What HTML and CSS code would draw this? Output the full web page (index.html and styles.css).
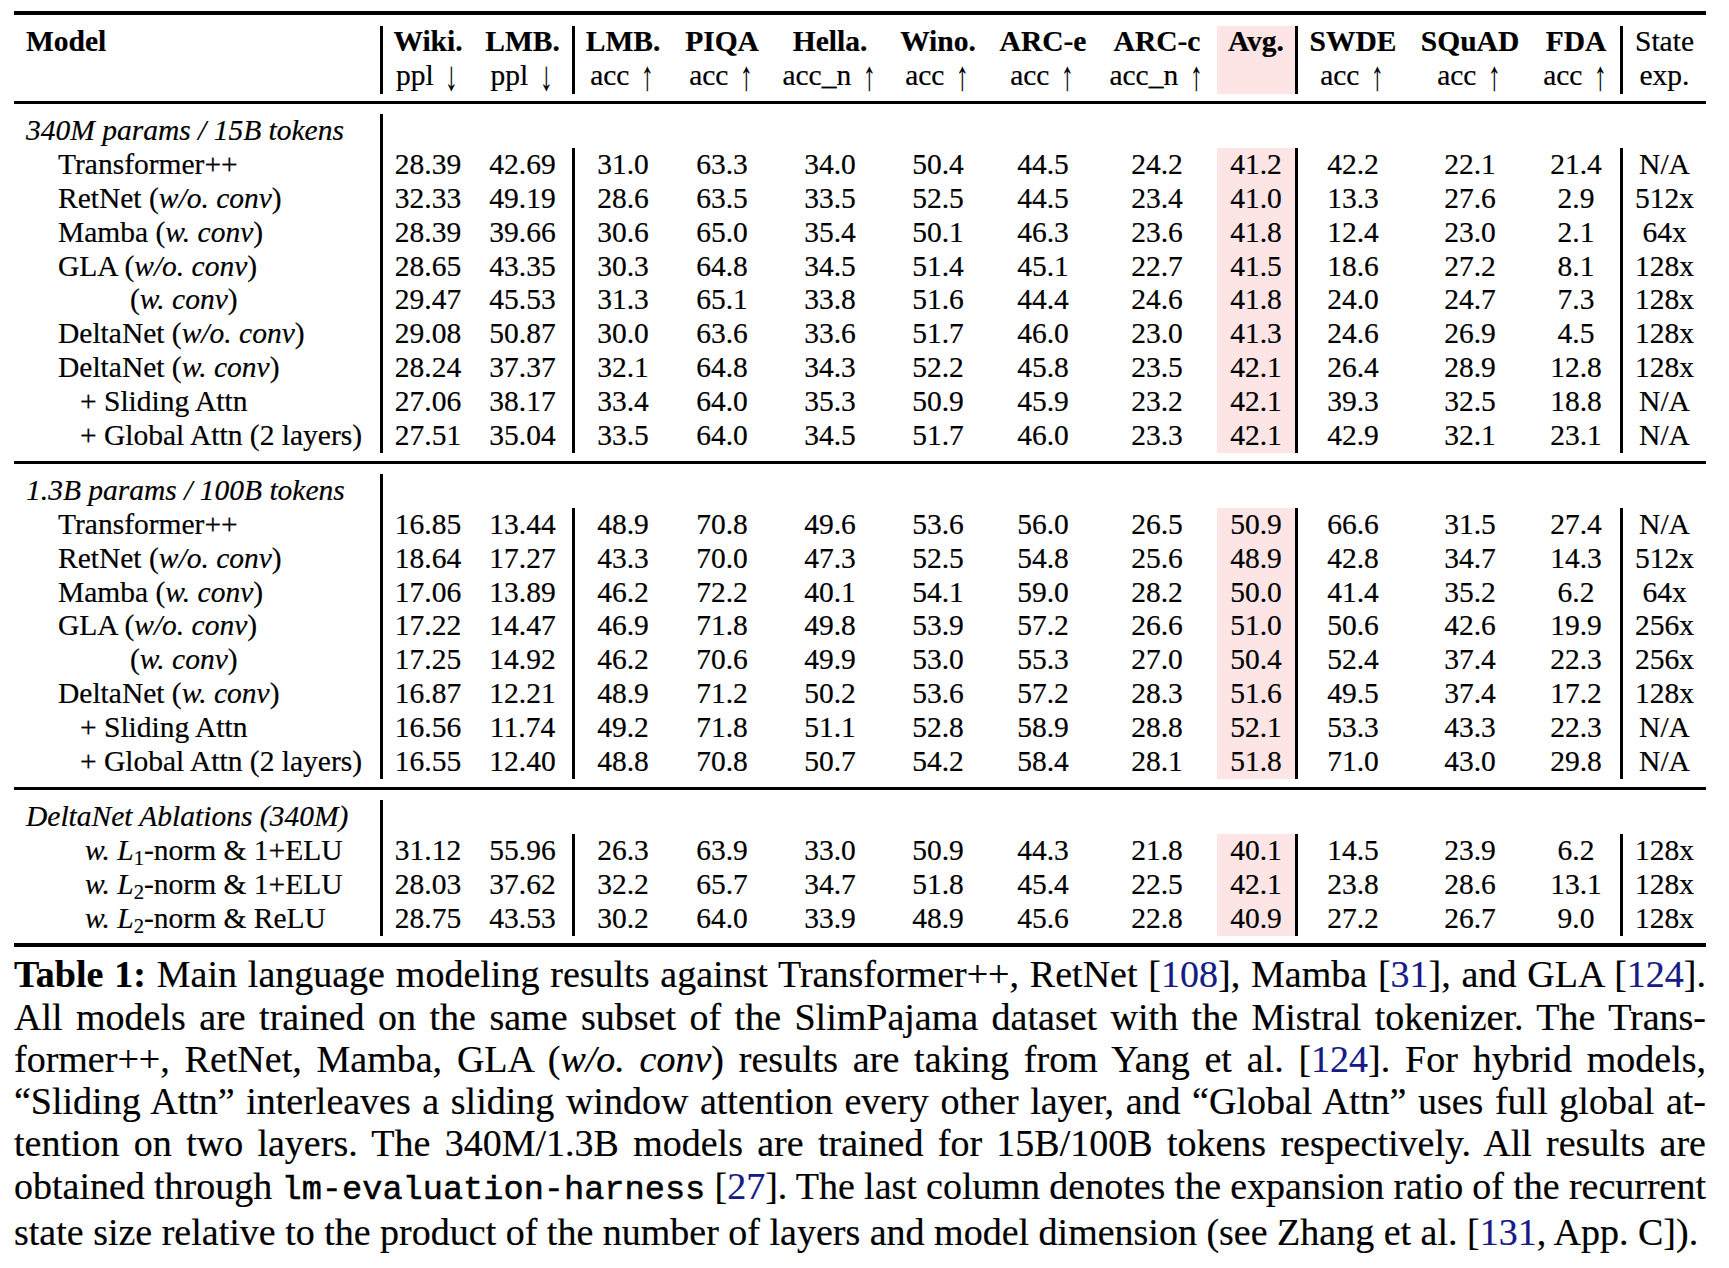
FILE: index.html
```html
<!DOCTYPE html>
<html lang="en">
<head>
<meta charset="utf-8">
<title>Table 1</title>
<link rel="stylesheet" href="styles.css">
</head>
<body>
<div class="page">
  <div class="rule heavy"></div>

  <div class="head">
    <div class="hc"><b>Model</b></div>
    <div class="hc"><b>Wiki.</b><span>ppl <span class="arr">↓</span></span></div>
    <div class="hc"><b>LMB.</b><span>ppl <span class="arr">↓</span></span></div>
    <div class="hc"><b>LMB.</b><span>acc <span class="arr">↑</span></span></div>
    <div class="hc"><b>PIQA</b><span>acc <span class="arr">↑</span></span></div>
    <div class="hc"><b>Hella.</b><span>acc_n <span class="arr">↑</span></span></div>
    <div class="hc"><b>Wino.</b><span>acc <span class="arr">↑</span></span></div>
    <div class="hc"><b>ARC-e</b><span>acc <span class="arr">↑</span></span></div>
    <div class="hc"><b>ARC-c</b><span>acc_n <span class="arr">↑</span></span></div>
    <div class="hc"><b>Avg.</b></div>
    <div class="hc"><b>SWDE</b><span>acc <span class="arr">↑</span></span></div>
    <div class="hc"><b>SQuAD</b><span>acc <span class="arr">↑</span></span></div>
    <div class="hc"><b>FDA</b><span>acc <span class="arr">↑</span></span></div>
    <div class="hc"><span>State</span><span>exp.</span></div>
  </div>

  <div class="rule"></div>

  <div class="section">
    <div class="row title"><span class="label"><i>340M params / 15B tokens</i></span><span class="rest"></span></div>
    <div class="row data"><span class="m1">Transformer++</span><span>28.39</span><span>42.69</span><span>31.0</span><span>63.3</span><span>34.0</span><span>50.4</span><span>44.5</span><span>24.2</span><span>41.2</span><span>42.2</span><span>22.1</span><span>21.4</span><span>N/A</span></div>
    <div class="row data"><span class="m1">RetNet (<i>w/o. conv</i>)</span><span>32.33</span><span>49.19</span><span>28.6</span><span>63.5</span><span>33.5</span><span>52.5</span><span>44.5</span><span>23.4</span><span>41.0</span><span>13.3</span><span>27.6</span><span>2.9</span><span>512x</span></div>
    <div class="row data"><span class="m1">Mamba (<i>w. conv</i>)</span><span>28.39</span><span>39.66</span><span>30.6</span><span>65.0</span><span>35.4</span><span>50.1</span><span>46.3</span><span>23.6</span><span>41.8</span><span>12.4</span><span>23.0</span><span>2.1</span><span>64x</span></div>
    <div class="row data"><span class="m1">GLA (<i>w/o. conv</i>)</span><span>28.65</span><span>43.35</span><span>30.3</span><span>64.8</span><span>34.5</span><span>51.4</span><span>45.1</span><span>22.7</span><span>41.5</span><span>18.6</span><span>27.2</span><span>8.1</span><span>128x</span></div>
    <div class="row data"><span class="m3">(<i>w. conv</i>)</span><span>29.47</span><span>45.53</span><span>31.3</span><span>65.1</span><span>33.8</span><span>51.6</span><span>44.4</span><span>24.6</span><span>41.8</span><span>24.0</span><span>24.7</span><span>7.3</span><span>128x</span></div>
    <div class="row data"><span class="m1">DeltaNet (<i>w/o. conv</i>)</span><span>29.08</span><span>50.87</span><span>30.0</span><span>63.6</span><span>33.6</span><span>51.7</span><span>46.0</span><span>23.0</span><span>41.3</span><span>24.6</span><span>26.9</span><span>4.5</span><span>128x</span></div>
    <div class="row data"><span class="m1">DeltaNet (<i>w. conv</i>)</span><span>28.24</span><span>37.37</span><span>32.1</span><span>64.8</span><span>34.3</span><span>52.2</span><span>45.8</span><span>23.5</span><span>42.1</span><span>26.4</span><span>28.9</span><span>12.8</span><span>128x</span></div>
    <div class="row data"><span class="m2">+ Sliding Attn</span><span>27.06</span><span>38.17</span><span>33.4</span><span>64.0</span><span>35.3</span><span>50.9</span><span>45.9</span><span>23.2</span><span>42.1</span><span>39.3</span><span>32.5</span><span>18.8</span><span>N/A</span></div>
    <div class="row data"><span class="m2">+ Global Attn (2 layers)</span><span>27.51</span><span>35.04</span><span>33.5</span><span>64.0</span><span>34.5</span><span>51.7</span><span>46.0</span><span>23.3</span><span>42.1</span><span>42.9</span><span>32.1</span><span>23.1</span><span>N/A</span></div>
  </div>

  <div class="rule"></div>

  <div class="section">
    <div class="row title"><span class="label"><i>1.3B params / 100B tokens</i></span><span class="rest"></span></div>
    <div class="row data"><span class="m1">Transformer++</span><span>16.85</span><span>13.44</span><span>48.9</span><span>70.8</span><span>49.6</span><span>53.6</span><span>56.0</span><span>26.5</span><span>50.9</span><span>66.6</span><span>31.5</span><span>27.4</span><span>N/A</span></div>
    <div class="row data"><span class="m1">RetNet (<i>w/o. conv</i>)</span><span>18.64</span><span>17.27</span><span>43.3</span><span>70.0</span><span>47.3</span><span>52.5</span><span>54.8</span><span>25.6</span><span>48.9</span><span>42.8</span><span>34.7</span><span>14.3</span><span>512x</span></div>
    <div class="row data"><span class="m1">Mamba (<i>w. conv</i>)</span><span>17.06</span><span>13.89</span><span>46.2</span><span>72.2</span><span>40.1</span><span>54.1</span><span>59.0</span><span>28.2</span><span>50.0</span><span>41.4</span><span>35.2</span><span>6.2</span><span>64x</span></div>
    <div class="row data"><span class="m1">GLA (<i>w/o. conv</i>)</span><span>17.22</span><span>14.47</span><span>46.9</span><span>71.8</span><span>49.8</span><span>53.9</span><span>57.2</span><span>26.6</span><span>51.0</span><span>50.6</span><span>42.6</span><span>19.9</span><span>256x</span></div>
    <div class="row data"><span class="m3">(<i>w. conv</i>)</span><span>17.25</span><span>14.92</span><span>46.2</span><span>70.6</span><span>49.9</span><span>53.0</span><span>55.3</span><span>27.0</span><span>50.4</span><span>52.4</span><span>37.4</span><span>22.3</span><span>256x</span></div>
    <div class="row data"><span class="m1">DeltaNet (<i>w. conv</i>)</span><span>16.87</span><span>12.21</span><span>48.9</span><span>71.2</span><span>50.2</span><span>53.6</span><span>57.2</span><span>28.3</span><span>51.6</span><span>49.5</span><span>37.4</span><span>17.2</span><span>128x</span></div>
    <div class="row data"><span class="m2">+ Sliding Attn</span><span>16.56</span><span>11.74</span><span>49.2</span><span>71.8</span><span>51.1</span><span>52.8</span><span>58.9</span><span>28.8</span><span>52.1</span><span>53.3</span><span>43.3</span><span>22.3</span><span>N/A</span></div>
    <div class="row data"><span class="m2">+ Global Attn (2 layers)</span><span>16.55</span><span>12.40</span><span>48.8</span><span>70.8</span><span>50.7</span><span>54.2</span><span>58.4</span><span>28.1</span><span>51.8</span><span>71.0</span><span>43.0</span><span>29.8</span><span>N/A</span></div>
  </div>

  <div class="rule"></div>

  <div class="section">
    <div class="row title"><span class="label"><i>DeltaNet Ablations (340M)</i></span><span class="rest"></span></div>
    <div class="row data"><span class="m4"><i>w.</i> <i>L</i><sub>1</sub>-norm &amp; 1+ELU</span><span>31.12</span><span>55.96</span><span>26.3</span><span>63.9</span><span>33.0</span><span>50.9</span><span>44.3</span><span>21.8</span><span>40.1</span><span>14.5</span><span>23.9</span><span>6.2</span><span>128x</span></div>
    <div class="row data"><span class="m4"><i>w.</i> <i>L</i><sub>2</sub>-norm &amp; 1+ELU</span><span>28.03</span><span>37.62</span><span>32.2</span><span>65.7</span><span>34.7</span><span>51.8</span><span>45.4</span><span>22.5</span><span>42.1</span><span>23.8</span><span>28.6</span><span>13.1</span><span>128x</span></div>
    <div class="row data"><span class="m4"><i>w.</i> <i>L</i><sub>2</sub>-norm &amp; ReLU</span><span>28.75</span><span>43.53</span><span>30.2</span><span>64.0</span><span>33.9</span><span>48.9</span><span>45.6</span><span>22.8</span><span>40.9</span><span>27.2</span><span>26.7</span><span>9.0</span><span>128x</span></div>
  </div>

  <div class="rule heavy"></div>

  <div class="caption">
    <p class="line"><b>Table 1:</b> Main language modeling results against Transformer++, RetNet [<a>108</a>], Mamba [<a>31</a>], and GLA [<a>124</a>].</p>
    <p class="line">All models are trained on the same subset of the SlimPajama dataset with the Mistral tokenizer. The Trans-</p>
    <p class="line">former++, RetNet, Mamba, GLA (<i>w/o. conv</i>) results are taking from Yang et al. [<a>124</a>]. For hybrid models,</p>
    <p class="line">“Sliding Attn” interleaves a sliding window attention every other layer, and “Global Attn” uses full global at-</p>
    <p class="line">tention on two layers. The 340M/1.3B models are trained for 15B/100B tokens respectively. All results are</p>
    <p class="line tight">obtained through <code>lm-evaluation-harness</code> [<a>27</a>]. The last column denotes the expansion ratio of the recurrent</p>
    <p class="line last">state size relative to the product of the number of layers and model dimension (see Zhang et al. [<a>131</a>, App. C]).</p>
  </div>
</div>
</body>
</html>
```

FILE: styles.css
```css
html, body {
  margin: 0;
  padding: 0;
  background: #ffffff;
  color: #000000;
}

.page {
  width: 1692px;
  margin: 11px 0 0 14px;
  font-family: "Liberation Serif", "Times New Roman", serif;
  -webkit-text-stroke: 0.2px #000;
}

.rule {
  height: 3px;
  background: #000;
}

.rule.heavy {
  height: 4px;
}

/* shared 14-column layout */
.head,
.row {
  display: grid;
  grid-template-columns: 369px 90px 102px 96px 102px 114px 102px 108px 120px 81px 110px 124px 91px 83px;
  font-size: 29.5px;
}

/* header */
.head {
  margin: 11px 0 7px;
}

.hc {
  display: flex;
  flex-direction: column;
  align-items: center;
  height: 68px;
  box-sizing: border-box;
  line-height: 31px;
  white-space: nowrap;
}

.hc > :nth-child(2) {
  line-height: 37px;
}

.hc b {
  font-weight: 700;
}

.hc:first-child {
  align-items: flex-start;
  padding-left: 12px;
}

.arr {
  display: inline-block;
  font-size: 1.4em;
  line-height: 0;
  vertical-align: -0.12em;
  transform: scaleX(0.62);
  margin: 0 -0.04em 0 0;
}

.head > .hc:nth-child(1),
.head > .hc:nth-child(3),
.head > .hc:nth-child(10),
.head > .hc:nth-child(13) {
  border-right: 3px solid #000;
}

.head > .hc:nth-child(10) {
  background: #fde5e5;
  background-clip: padding-box;
}

/* body sections */
.section {
  padding: 10px 0 8px;
}

.row {
  height: 33.9px;
  line-height: 33.9px;
}

.row > span {
  text-align: center;
  white-space: nowrap;
}

.row.title .label {
  grid-column: 1;
  text-align: left;
  padding-left: 12px;
  border-right: 3px solid #000;
}

.row.title .rest {
  grid-column: 2 / -1;
}

.row.data > span:nth-child(1),
.row.data > span:nth-child(3),
.row.data > span:nth-child(10),
.row.data > span:nth-child(13) {
  border-right: 3px solid #000;
}

.row.data > span:nth-child(10) {
  background: #fde5e5;
  background-clip: padding-box;
}

.row.data > span:first-child {
  text-align: left;
}

.m1 { padding-left: 44px; }
.m2 { padding-left: 66px; }
.m3 { padding-left: 116px; }
.m4 { padding-left: 71px; }

sub {
  font-size: 0.7em;
  line-height: 0;
  vertical-align: -0.22em;
}

/* caption */
.caption {
  margin-top: 6px;
  font-size: 38px;
  line-height: 42.2px;
}

.caption .line {
  margin: 0;
  text-align: justify;
  text-align-last: justify;
}

.caption .line.tight {
  word-spacing: -3px;
}

.caption .line.last {
  text-align: left;
  text-align-last: left;
}

.caption a {
  color: #161b86;
  -webkit-text-stroke-color: #161b86;
  text-decoration: none;
}

.caption code {
  font-family: "Liberation Mono", "Courier New", monospace;
  font-size: 0.885em;
  -webkit-text-stroke: 0.5px #000;
}
```
